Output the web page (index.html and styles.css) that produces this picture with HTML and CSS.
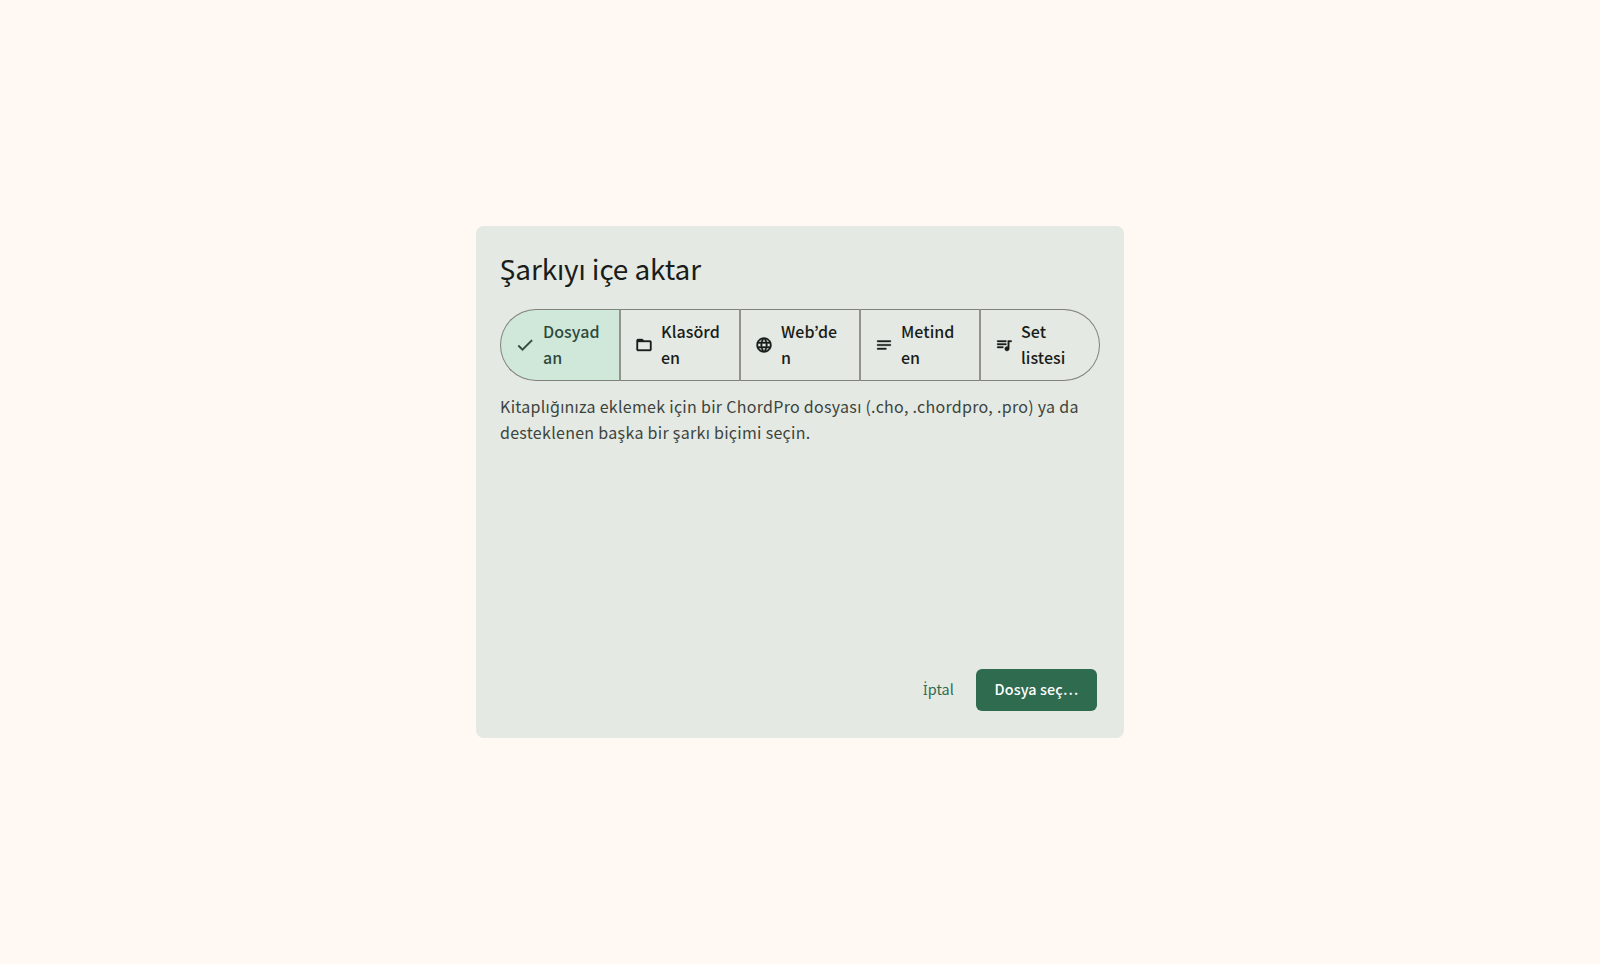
FILE: index.html
```html
<!DOCTYPE html>
<html lang="tr">
<head>
<meta charset="utf-8">
<title>Şarkıyı içe aktar</title>
<link rel="stylesheet" href="styles.css">
</head>
<body>
<div class="dialog">
  <h2 class="title">Şarkıyı içe aktar</h2>
  <div class="segments">
    <button class="seg active">
      <svg class="ico" viewBox="0 0 24 24"><path d="M9 16.17 4.83 12l-1.42 1.41L9 19 21 7l-1.41-1.41z"/></svg>
      <span class="lbl">Dosyadan</span>
    </button>
    <button class="seg">
      <svg class="ico" viewBox="0 0 24 24"><path d="M20 6h-8l-2-2H4c-1.1 0-1.99.9-1.99 2L2 18c0 1.1.9 2 2 2h16c1.1 0 2-.9 2-2V8c0-1.1-.9-2-2-2zm0 12H4V8h16v10z"/></svg>
      <span class="lbl">Klasörden</span>
    </button>
    <button class="seg">
      <svg class="ico" viewBox="0 0 24 24"><path d="M11.99 2C6.47 2 2 6.48 2 12s4.47 10 9.99 10C17.52 22 22 17.52 22 12S17.52 2 11.99 2zm6.93 6h-2.95c-.32-1.25-.78-2.45-1.38-3.56 1.84.63 3.37 1.91 4.33 3.56zM12 4.04c.83 1.2 1.48 2.53 1.91 3.96h-3.82c.43-1.43 1.08-2.76 1.91-3.96zM4.26 14C4.1 13.36 4 12.69 4 12s.1-1.36.26-2h3.38c-.08.66-.14 1.32-.14 2s.06 1.34.14 2H4.26zm.82 2h2.95c.32 1.25.78 2.45 1.38 3.56-1.84-.63-3.37-1.9-4.33-3.56zm2.95-8H5.08c.96-1.66 2.49-2.93 4.33-3.56C8.81 5.55 8.35 6.75 8.03 8zM12 19.96c-.83-1.2-1.48-2.53-1.91-3.96h3.82c-.43 1.43-1.08 2.76-1.91 3.96zM14.34 14H9.66c-.09-.66-.16-1.32-.16-2s.07-1.35.16-2h4.68c.09.65.16 1.32.16 2s-.07 1.34-.16 2zm.25 5.56c.6-1.11 1.06-2.31 1.38-3.56h2.95c-.96 1.65-2.49 2.93-4.33 3.56zM16.36 14c.08-.66.14-1.32.14-2s-.06-1.34-.14-2h3.38c.16.64.26 1.31.26 2s-.1 1.36-.26 2h-3.38z"/></svg>
      <span class="lbl">Web’den</span>
    </button>
    <button class="seg">
      <svg class="ico" viewBox="0 0 24 24"><path d="M3 18h12v-2H3v2zM3 6v2h18V6H3zm0 7h18v-2H3v2z"/></svg>
      <span class="lbl">Metinden</span>
    </button>
    <button class="seg">
      <svg class="ico" viewBox="0 0 24 24"><path d="M15 6H3v2h12V6zm0 4H3v2h12v-2zM3 16h8v-2H3v2zM17 6v8.18c-.31-.11-.65-.18-1-.18-1.66 0-3 1.34-3 3s1.34 3 3 3 3-1.34 3-3V8h3V6h-5z"/></svg>
      <span class="lbl">Set listesi</span>
    </button>
  </div>
  <p class="desc">Kitaplığınıza eklemek için bir ChordPro dosyası (.cho, .chordpro, .pro) ya da desteklenen başka bir şarkı biçimi seçin.</p>
  <div class="actions">
    <button class="btn-text"><span class="cap">İ</span>ptal</button>
    <button class="btn-filled">Dosya seç…</button>
  </div>
</div>
</body>
</html>
```
FILE: styles.css
```css
* { box-sizing: border-box; }
html, body { height: 100%; }
body {
  margin: 0;
  background: #fff8f3;
  font-family: "Noto Sans CJK KR", "Noto Sans", sans-serif;
  display: flex;
  align-items: center;
  justify-content: center;
}
.dialog {
  width: 648px;
  height: 512px;
  background: #e4e9e3;
  border-radius: 8px;
  padding: 24px;
  display: flex;
  flex-direction: column;
}
.title {
  margin: 0 0 23px;
  font-size: 28px;
  font-weight: 400;
  line-height: 36px;
  color: #191d1a;
  letter-spacing: -0.12px;
}
.segments {
  display: flex;
  width: 600px;
  height: 72px;
}
.seg {
  width: 120px;
  flex: none;
  display: flex;
  align-items: center;
  gap: 8px;
  padding: 0 0 0 15px;
  background: transparent;
  border: 1px solid #7f817b;
  border-left: 0;
  border-right: 0;
  font: inherit;
  font-size: 16px;
  font-weight: 500;
  line-height: 25.6px;
  letter-spacing: 0.05px;
  color: #191d1a;
  text-align: left;
}
.seg + .seg { box-shadow: -1px 0 0 #92948c, inset 1px 0 0 #92948c; }
.seg:first-child {
  border-left: 1px solid #7f817b;
  border-radius: 36px 0 0 36px;
  padding-left: 14px;
}
.seg:last-child {
  border-right: 1px solid #7f817b;
  border-radius: 0 36px 36px 0;
}
.seg.active { background: #d0e8da; color: #2f4a3c; }
.ico { width: 18px; height: 18px; fill: currentColor; stroke: currentColor; stroke-width: 0.5; flex: none; }
.active .ico { width: 20px; height: 20px; }
.lbl { overflow-wrap: anywhere; width: 60px; flex: none; }
.desc {
  margin: 13px 0 0;
  font-size: 16px;
  letter-spacing: 0.29px;
  line-height: 25.6px;
  color: #3c443e;
}
.actions {
  margin-top: auto;
  display: flex;
  justify-content: flex-end;
  align-items: center;
  gap: 4px;
  padding-right: 3px;
  padding-bottom: 3px;
}
.btn-text, .btn-filled {
  font: inherit;
  font-size: 14.4px;
  letter-spacing: 0.1px;
  font-weight: 500;
  border: 0;
  border-radius: 6px;
  height: 42px;
  padding: 0 18px 4px;
}
.btn-text { background: transparent; color: #2e6b4f; font-weight: 400; }
.btn-filled { background: #2e6b4f; color: #fff; width: 121px; padding: 0 0 4px; }
.cap { font-family: "Noto Sans", sans-serif; font-size: 13.6px; }
```
